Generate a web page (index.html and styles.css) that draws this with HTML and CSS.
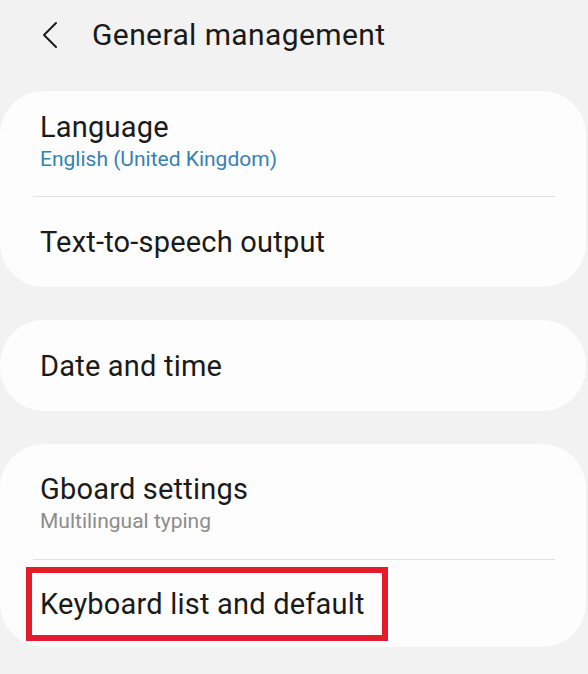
FILE: index.html
```html
<!DOCTYPE html>
<html>
	<head>
		<meta charset="utf-8">
		<meta name="viewport" content="width=device-width, initial-scale=1">
		<title>General management</title>
		<link rel="stylesheet" href="styles.css">
	</head>
	<body>
		<header class="topbar">
			<button class="back" aria-label="Back">
				<svg width="18" height="28" viewBox="0 0 18 28">
					<path d="M15 2 L3 14 L15 26" fill="none" stroke="#1c1c1c" stroke-width="2" stroke-linecap="round" stroke-linejoin="round"/>
				</svg>
			</button>
			<h1 class="title">General management</h1>
		</header>

		<main class="groups">
			<section class="card">
				<div class="row tall first">
					<p class="label">Language</p>
					<p class="sub accent">English (United Kingdom)</p>
				</div>
				<div class="divider"></div>
				<div class="row single" style="height: 90px">
					<p class="label">Text-to-speech output</p>
				</div>
			</section>

			<section class="card">
				<div class="row single" style="height: 91px">
					<p class="label">Date and time</p>
				</div>
			</section>

			<section class="card">
				<div class="row tall">
					<p class="label">Gboard settings</p>
					<p class="sub muted">Multilingual typing</p>
				</div>
				<div class="divider"></div>
				<div class="row single" style="height: 87px">
					<p class="label mark">Keyboard list and default</p>
				</div>
			</section>
		</main>
	</body>
</html>
```

FILE: styles.css
```css
html, body {
	margin: 0;
	padding: 0;
	background-color: #f2f2f2;
	font-family: Roboto, "Noto Sans", sans-serif;
	color: #1a1a1a;
}

p {
	margin: 0;
}

.topbar {
	display: flex;
	align-items: center;
	height: 68px;
	padding-left: 41px;
	margin-bottom: 23px;
}

.back {
	background: none;
	border: 0;
	padding: 0;
	display: flex;
	margin-right: 33px;
	margin-top: 1px;
}

.title {
	margin: 0;
	font-size: 30px;
	font-weight: 400;
	letter-spacing: 0.4px;
}

.groups {
	display: flex;
	flex-direction: column;
	gap: 33px;
	padding-right: 2px;
}

.card {
	background-color: #fdfdfd;
	border-radius: 44px;
}

.row {
	padding: 0 40px;
}

.row.tall {
	padding-top: 29px;
	padding-bottom: 25px;
}

.row.tall.first {
	padding-top: 20px;
	padding-bottom: 24px;
}

.row.single {
	display: flex;
	align-items: center;
}

.label {
	font-size: 29px;
	line-height: 32px;
	letter-spacing: 0.2px;
}

.sub {
	font-size: 21px;
	line-height: 26px;
	margin-top: 3px;
}

.accent {
	color: #3682b2;
}

.muted {
	color: #8c8c8c;
}

.divider {
	height: 1px;
	background-color: #e2e2e2;
	margin: 0 31px 0 33px;
}

/* highlighted entry */
.mark {
	border: 6px solid #e21c2a;
	margin-left: -14px;
	padding: 15px 17px 15px 8px;
}
```
